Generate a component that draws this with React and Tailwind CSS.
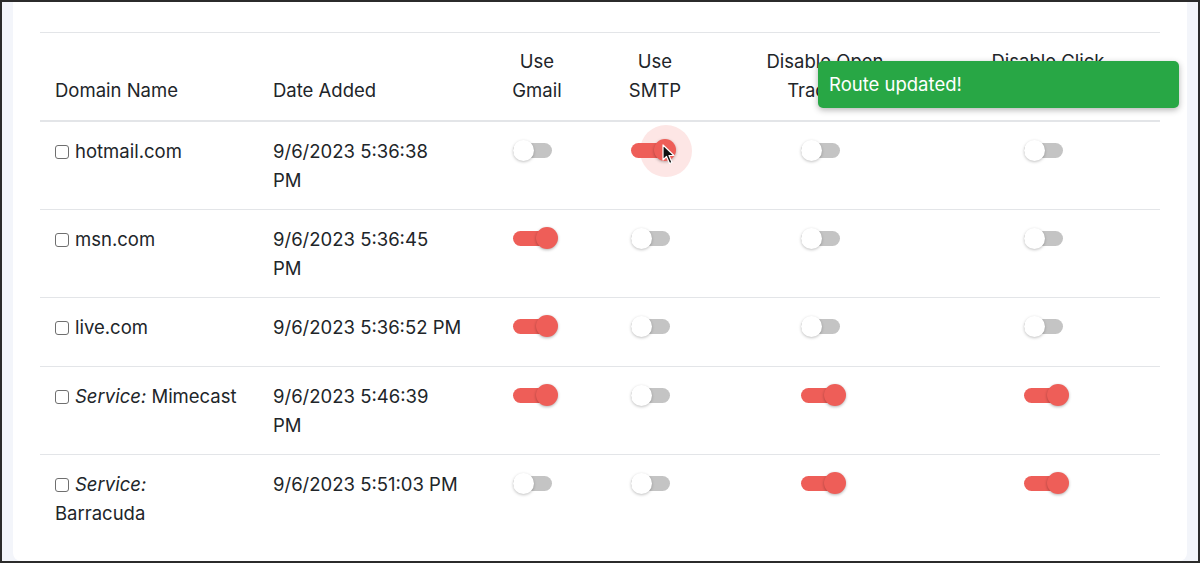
import React from 'react';

const rows = [
  { name: ['hotmail.com'], date: ['9/6/2023 5:36:38', 'PM'], gmail: false, smtp: true, open: false, click: false, focus: true },
  { name: ['msn.com'], date: ['9/6/2023 5:36:45', 'PM'], gmail: true, smtp: false, open: false, click: false },
  { name: ['live.com'], date: ['9/6/2023 5:36:52 PM'], gmail: true, smtp: false, open: false, click: false },
  { service: true, name: ['Mimecast'], date: ['9/6/2023 5:46:39', 'PM'], gmail: true, smtp: false, open: true, click: true },
  { service: true, name: ['Barracuda'], wrap: true, date: ['9/6/2023 5:51:03 PM'], gmail: false, smtp: false, open: true, click: true },
];

function Toggle({ on, focus }) {
  return (
    <div className="h-[39px] flex justify-center">
      <div className="relative w-[45px] h-[28px] -ml-[4px]">
        {focus && <div className="absolute left-[9px] top-[-12px] w-[52px] h-[52px] rounded-full bg-[#fde6e5]" />}
        <div className={`absolute left-0 top-[6px] h-[15px] w-[39px] rounded-full ${on ? 'bg-[#ee5e58]' : 'bg-[#c4c4c4]'}`} />
        {on ? (
          <div className="absolute left-[23px] top-[2px] w-[22px] h-[22px] rounded-full bg-[#ee5e58] shadow-[0_1px_3px_rgba(0,0,0,0.3)]" />
        ) : (
          <div className="absolute left-0 top-[3px] w-[21px] h-[21px] rounded-full bg-white shadow-[0_1px_3px_rgba(0,0,0,0.25)]" />
        )}
        {focus && (
          <svg className="absolute left-[31px] top-[7px]" width="14" height="22" viewBox="0 0 14 22">
            <path d="M1 1 L1 16 L4.5 12.5 L7.5 19.5 L10 18.5 L7 11.5 L12 11.5 Z" fill="#111" stroke="#fff" strokeWidth="1.2" strokeLinejoin="round" />
          </svg>
        )}
      </div>
    </div>
  );
}

function Box() {
  return <span className="inline-block w-[14px] h-[14px] border border-[#6f6f6f] rounded-[3px] mr-[6px] align-[-1px] bg-white" />;
}

export default function App() {
  const cell = 'px-[15px] pt-[15px] pb-[14px] align-top';
  return (
    <div className="relative w-[1200px] h-[563px] border-2 border-[#2b2b2b] bg-[#f3f5fa] overflow-hidden" style={{ fontFamily: 'Inter, "Noto Sans", sans-serif' }}>
      <div className="ml-[11px] w-[1174px] h-full bg-white px-[27px] pt-[30px] rounded-b-[8px] text-[#212529] text-[18.5px] leading-[29px]">
        <table className="w-[1120px] table-fixed border-collapse border-t border-[#e3e5e8]">
          <colgroup>
            <col className="w-[218px]" />
            <col className="w-[220px]" />
            <col className="w-[118px]" />
            <col className="w-[118px]" />
            <col className="w-[222px]" />
            <col className="w-[224px]" />
          </colgroup>
          <thead>
            <tr className="border-b-2 border-[#e3e5e8]">
              <th className="px-[15px] pt-[14px] pb-[15px] text-left font-normal align-bottom">Domain Name</th>
              <th className="px-[15px] pt-[14px] pb-[15px] text-left font-normal align-bottom">Date Added</th>
              <th className="px-[15px] pt-[14px] pb-[15px] text-center font-normal align-bottom">Use<br />Gmail</th>
              <th className="px-[15px] pt-[14px] pb-[15px] text-center font-normal align-bottom">Use<br />SMTP</th>
              <th className="px-[15px] pt-[14px] pb-[15px] text-center font-normal align-bottom whitespace-nowrap">Disable Open<br />Tracking</th>
              <th className="px-[15px] pt-[14px] pb-[15px] text-center font-normal align-bottom whitespace-nowrap">Disable Click<br />Tracking</th>
            </tr>
          </thead>
          <tbody>
            {rows.map((r, i) => (
              <tr key={i} className={i < rows.length - 1 ? 'border-b border-[#e3e5e8]' : ''}>
                <td className={cell}>
                  <Box />
                  {r.service && <><em>Service:</em>{r.wrap ? <br /> : ' '}</>}
                  {r.name[0]}
                </td>
                <td className={cell}>
                  {r.date.map((d, j) => <div key={j} className="whitespace-nowrap">{d}</div>)}
                </td>
                <td className={cell}><Toggle on={r.gmail} /></td>
                <td className={cell}><Toggle on={r.smtp} focus={r.focus} /></td>
                <td className={cell}><Toggle on={r.open} /></td>
                <td className={cell}><Toggle on={r.click} /></td>
              </tr>
            ))}
          </tbody>
        </table>
      </div>
      <div className="absolute left-[816px] top-[59px] w-[361px] h-[47px] rounded-[5px] bg-[#28a745] shadow-[0_2px_6px_rgba(0,0,0,0.3)] text-white text-[18.5px] leading-[47px] pl-[11px]" style={{ fontFamily: 'Inter, "Noto Sans", sans-serif' }}>
        Route updated!
      </div>
    </div>
  );
}
